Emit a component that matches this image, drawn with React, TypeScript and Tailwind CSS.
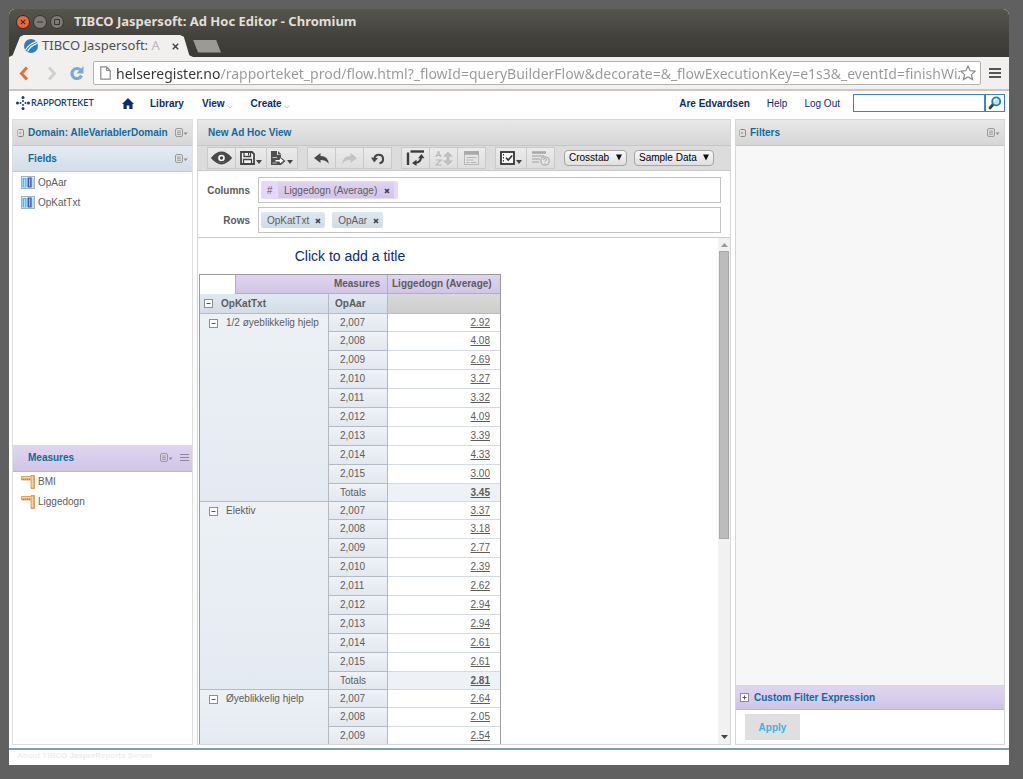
import React from 'react';
import clsx from 'clsx';

interface Row {
  year: string;
  value: string;
}

interface Group {
  name: string;
  rows: Row[];
}

const years = ['2,007', '2,008', '2,009', '2,010', '2,011', '2,012', '2,013', '2,014', '2,015', 'Totals'];

const toRows = (values: string[]): Row[] => values.map((value, i) => ({ year: years[i], value }));

const groups: Group[] = [
  { name: '1/2 øyeblikkelig hjelp', rows: toRows(['2.92', '4.08', '2.69', '3.27', '3.32', '4.09', '3.39', '4.33', '3.00', '3.45']) },
  { name: 'Elektiv', rows: toRows(['3.37', '3.18', '2.77', '2.39', '2.62', '2.94', '2.94', '2.61', '2.61', '2.81']) },
  { name: 'Øyeblikkelig hjelp', rows: toRows(['2.64', '2.05', '2.54']) },
];

/* ---------- icons ---------- */

const MenuIcon = () => (
  <svg width="13" height="10" viewBox="0 0 13 10" fill="none">
    <rect x="0.5" y="0.5" width="7" height="8" rx="1.5" stroke="#9a9a9a" />
    <path d="M2 3h4M2 4.7h4M2 6.4h4" stroke="#9a9a9a" strokeWidth="0.9" />
    <path d="M8.6 4.6h4l-2 2.4z" fill="#8a8a8a" />
  </svg>
);

const CollapseIcon = () => (
  <svg width="7" height="8" viewBox="0 0 7 8" fill="none">
    <path d="M1.500.5h3.800q1.200 0 1.200 1.200v4.600q0 1.200-1.200 1.200H1.500" stroke="#8c8480" />
    <path d="M.5 1v6" stroke="#b8b2ae" />
    <path d="M3.500 2.500v3L2 4z" fill="#8c8480" />
  </svg>
);

const FieldIcon = () => (
  <svg width="14" height="13" viewBox="0 0 14 13">
    <rect x="0.5" y="0.5" width="13" height="12" fill="#e4f1fb" stroke="#9fb3c8" />
    <rect x="1.500" y="2" width="4" height="9.500" fill="#4fb8f2" />
    <rect x="3" y="3" width="1.200" height="8.500" fill="#a5e2ff" />
    <rect x="6.500" y="1.500" width="4.200" height="10" fill="#4150ae" />
    <rect x="8.100" y="2.500" width="1.200" height="8" fill="#b4bff5" />
    <rect x="11.500" y="2" width="1.300" height="9.500" fill="#9fd3f3" />
  </svg>
);

const MeasureIcon = () => (
  <svg width="14" height="14" viewBox="0 0 14 14">
    <path d="M.5 1.500H10V.5h3.500V13.500H10V5H.5z" fill="#f2a961" stroke="#cf8c4c" strokeWidth="0.700" />
    <path d="M1 2.600h9M11.300 1.500v11" stroke="#fdd6a6" strokeWidth="1.200" />
    <path d="M2.500 3.700V5M4.500 3.700V5M6.500 3.700V5M8.500 3.700V5" stroke="#a86a30" strokeWidth="0.600" />
  </svg>
);

const ToggleIcon = ({ open = true }: { open?: boolean }) => (
  <svg width="9" height="9" viewBox="0 0 9 9" fill="none">
    <rect x="0.5" y="0.5" width="8" height="8" fill="#fff" stroke="#8d8d8d" />
    <path d="M2.500 4.500h4" stroke="#555" />
    {!open && <path d="M4.500 2.500v4" stroke="#555" />}
  </svg>
);

const Caret = () => (
  <svg width="6" height="4" viewBox="0 0 6 4" className="mt-2">
    <path d="M0 0h6L3 4z" fill="#444" />
  </svg>
);

const EyeIcon = () => (
  <svg width="21" height="14" viewBox="0 0 21 14" fill="none">
    <path d="M1 7Q10.500-4 20 7Q10.500 18 1 7z" fill="#fff" stroke="#484848" strokeWidth="1.800" />
    <path d="M1 7Q4 3.300 8 2.200Q5 7 8 11.800Q4 10.700 1 7zM20 7Q17 3.300 13 2.200Q16 7 13 11.800Q17 10.700 20 7z" fill="#484848" />
    <circle cx="10.500" cy="7" r="4.200" fill="#fff" stroke="#484848" strokeWidth="1.800" />
    <circle cx="10.500" cy="7" r="1.700" fill="#484848" />
  </svg>
);

const SaveIcon = () => (
  <svg width="15" height="14" viewBox="0 0 15 14" fill="none">
    <path d="M1 1h11l2 2v10H1z" fill="#f5f5f5" stroke="#444" strokeWidth="1.800" />
    <path d="M4 1.500v4h6.500v-4M3.500 13V8.500h8V13" stroke="#444" strokeWidth="1.300" />
    <path d="M8.500 2v2.500" stroke="#444" />
  </svg>
);

const ExportIcon = () => (
  <svg width="15" height="14" viewBox="0 0 15 14" fill="none">
    <path d="M0 0h6v4h4v2.500L14.500 10 10 14H0z" fill="#505050" />
    <path d="M7 0l3.500 3.500H7z" fill="#505050" />
    <path d="M4 8.500h4.500V6L13 9.800 8.500 13.400V11H4z" fill="#fff" stroke="#505050" />
    <path d="M1.500 6.500H6M1.500 12h4" stroke="#ddd" strokeWidth="0.800" />
  </svg>
);

const UndoIcon = () => (
  <svg width="15" height="11" viewBox="0 0 15 11">
    <path d="M0 5L6.500 0v3Q14.500 3.200 14.600 11Q12.500 7 6.500 7v3z" fill="#4a4a4a" />
  </svg>
);

const RedoIcon = () => (
  <svg width="15" height="11" viewBox="0 0 15 11">
    <path d="M15 5L8.500 0v3Q.5 3.200 .4 11Q2.500 7 8.500 7v3z" fill="#c4c4c4" />
  </svg>
);

const ResetIcon = () => (
  <svg width="14" height="13" viewBox="0 0 14 13" fill="none">
    <path d="M3.500 6.500A4.300 4.300 0 1 1 8.500 11.300" stroke="#484848" strokeWidth="2.100" />
    <path d="M0 5.500l7 .5-3.800 4.500z" fill="#484848" />
  </svg>
);

const PivotIcon = () => (
  <svg width="19" height="16" viewBox="0 0 19 16" fill="none">
    <path d="M4.500 1.500H18" stroke="#3c3c3c" strokeWidth="2.400" />
    <path d="M2 2.500V15" stroke="#3c3c3c" strokeWidth="2.400" />
    <path d="M9 13Q15 12.500 15 7" stroke="#3c3c3c" strokeWidth="2" />
    <path d="M6 13l4.500-3.300v6.300zM15.500 4l-3.500 4.200h6.500z" fill="#3c3c3c" />
  </svg>
);

const SortIcon = () => (
  <svg width="18" height="15" viewBox="0 0 18 15" fill="none" stroke="#b9b9b9" strokeWidth="1.200">
    <path d="M1 6L3.500 .5 6 6M2 4.300h3M1 9h5L1 14h5.500" />
    <path d="M9.500 5L13 1.500 16.500 5H13.800v5h2.700L13 13.500 9.500 10h2.700V5z" fill="#c9c9c9" />
  </svg>
);

const FormIcon = () => (
  <svg width="15" height="14" viewBox="0 0 15 14" fill="none">
    <rect x="0.5" y="0.5" width="14" height="13" stroke="#b8b8b8" />
    <path d="M0 2h15" stroke="#a9a9a9" strokeWidth="3.500" />
    <path d="M2.500 6.500h10M2.500 9h7M2.500 11.500h3M7 11.500h5" stroke="#b5b5b5" />
  </svg>
);

const OptionsIcon = () => (
  <svg width="15" height="14" viewBox="0 0 15 14" fill="none">
    <rect x="1" y="1" width="13" height="12" fill="#f8f8f8" stroke="#333" strokeWidth="1.800" />
    <path d="M3.500 3v8" stroke="#333" strokeDasharray="1.500 1.500" />
    <path d="M6 6.800l2.200 2.200 4-4.500" stroke="#333" strokeWidth="1.600" />
  </svg>
);

const QueryIcon = () => (
  <svg width="18" height="15" viewBox="0 0 18 15" fill="none">
    <path d="M0 1.500h14" stroke="#a9a9a9" strokeWidth="2.500" />
    <path d="M0 5h12M0 8h8M0 11h7" stroke="#b5b5b5" strokeWidth="1.300" />
    <circle cx="13" cy="10" r="4.200" fill="#e6e6e6" stroke="#b0b0b0" strokeWidth="1.300" />
    <path d="M11.500 9q0-1.500 1.500-1.500t1.500 1.300q0 .8-1.500 1.500v.7M13 12v1" stroke="#aaa" />
  </svg>
);

const SearchIcon = () => (
  <svg width="14" height="14" viewBox="0 0 14 14" fill="none">
    <path d="M5 8.500L2 12" stroke="#2c4250" strokeWidth="2.800" strokeLinecap="round" />
    <circle cx="8.200" cy="5.400" r="4" fill="#bfe3f2" stroke="#1f7f9e" strokeWidth="1.800" />
    <path d="M6 5q1-2 3-1.800" stroke="#fff" strokeWidth="1.300" />
  </svg>
);

/* ---------- shared parts ---------- */

const headerBase = 'flex shrink-0 items-center border-b text-[10px] font-bold text-[#0f6a9e]';
const greyHeader = 'h-[26px] border-[#c6c6c6] bg-linear-to-b from-[#e8e8e8] to-[#d6d6d6]';
const blueHeader = 'h-[26px] border-[#c2c9d2] bg-linear-to-b from-[#e4ebf3] to-[#d3dde8]';
const purpleHeader = 'border-[#bdb2d2] bg-linear-to-b from-[#e0d6f0] to-[#d0c4e6]';

const MenuButton = ({ label }: { label: string }) => (
  <button aria-label={label} className="ml-auto">
    <MenuIcon />
  </button>
);

interface ToolProps {
  label: string;
  caret?: boolean;
  disabled?: boolean;
  children: React.ReactNode;
}

const Tool: React.FC<ToolProps> = ({ label, caret, disabled, children }) => (
  <button
    aria-label={label}
    disabled={disabled}
    className={clsx(
      'flex h-5 items-center justify-center gap-px border-r border-[#c9c9c9] bg-linear-to-b from-[#ebebeb] to-[#dedede]',
      caret ? 'w-[31px]' : 'w-7',
    )}
  >
    {children}
    {caret && <Caret />}
  </button>
);

const ToolGroup = ({ children }: { children: React.ReactNode }) => (
  <div className="flex border-y border-l border-[#c9c9c9]">{children}</div>
);

const Picker = ({ label, value, width }: { label: string; value: string; width: string }) => (
  <div className={clsx('relative', width)}>
    <select
      aria-label={label}
      className="block h-4 w-full appearance-none rounded-sm border border-[#a5a5a5] bg-linear-to-b from-[#f8f8f8] to-[#dfdfdf] pl-1 text-[10px] leading-[14px] text-black"
    >
      <option>{value}</option>
    </select>
    <svg width="6" height="7" viewBox="0 0 6 7" className="pointer-events-none absolute top-1 right-[5px]">
      <path d="M0 .5h6L3 6.500z" fill="#111" />
    </svg>
  </div>
);

const RemoveButton = ({ name }: { name: string }) => (
  <button aria-label={`Remove ${name}`} className="px-1 pt-[2px]">
    <svg width="6" height="6" viewBox="0 0 6 6">
      <path d="M1 1l4 4M5 1L1 5" stroke="#444" strokeWidth="1.700" />
    </svg>
  </button>
);

const Chip = ({ name }: { name: string }) => (
  <span className="flex h-4 items-center gap-[2px] rounded-xs bg-linear-to-b from-[#dfe8f0] to-[#cfdbe7] pl-[6px]">
    {name}
    <RemoveButton name={name} />
  </span>
);

const Shelf = ({ label, children }: { label: string; children: React.ReactNode }) => (
  <div className="flex items-center gap-2 pr-[9px]">
    <span className="w-[52px] text-right font-bold">{label}</span>
    <div className="flex h-[26px] flex-1 items-center gap-[7px] border border-[#c3c3c3] bg-white px-[2px]">{children}</div>
  </div>
);

const FieldItem = ({ icon, name }: { icon: React.ReactNode; name: string }) => (
  <li className="flex h-5 items-center gap-[3px] pl-2">
    {icon}
    {name}
  </li>
);

/* ---------- browser chrome ---------- */

const BrowserChrome = () => (
  <header className="font-['Noto_Sans',sans-serif]">
    <div className="flex h-[26px] items-center rounded-t-md bg-linear-to-b from-[#56554d] to-[#43423d] pl-[7px]">
      <div className="flex gap-[3px]">
        <button aria-label="Close" className="flex size-[14px] items-center justify-center rounded-full border border-[#2d2c28] bg-[#ee6640]">
          <svg width="6" height="6" viewBox="0 0 6 6"><path d="M.8.8l4.400 4.400M5.200.8L.8 5.200" stroke="#53271a" strokeWidth="1.200" /></svg>
        </button>
        <button aria-label="Minimize" className="flex size-[14px] items-center justify-center rounded-full border border-[#35342f] bg-[#7d7b73]">
          <svg width="6" height="6" viewBox="0 0 6 6"><path d="M0 3h6" stroke="#35342f" /></svg>
        </button>
        <button aria-label="Maximize" className="flex size-[14px] items-center justify-center rounded-full border border-[#35342f] bg-[#7d7b73]">
          <svg width="6" height="6" viewBox="0 0 6 6" fill="none"><path d="M.5.5h5v5h-5z" stroke="#35342f" /></svg>
        </button>
      </div>
      <h1 className="ml-[10px] text-[13px] font-bold text-[#e2dfd6]">TIBCO Jaspersoft: Ad Hoc Editor - Chromium</h1>
    </div>

    <div className="flex h-[22px] items-center bg-linear-to-b from-[#43423d] to-[#3a3935]">
      <div className="flex h-full w-[184px] items-center bg-[#f1f0ef] pr-[14px] pl-[15px] text-[13px] text-[#4f4f4f] [clip-path:polygon(0_100%,2%_92%,6%_8%,8%_0,93%_0,95%_8%,98%_92%,100%_100%)]">
        <svg width="14" height="14" viewBox="0 0 14 14" className="shrink-0">
          <circle cx="7" cy="7" r="7" fill="#2f7fc0" />
          <path d="M1.500 11Q5 5 12.500 2.500M3.500 12.500Q6 7 13 4.500" stroke="#fff" strokeWidth="1.100" fill="none" />
        </svg>
        <span className="ml-1 whitespace-nowrap">
          TIBCO Jaspersoft: <span className="text-[#b9b8b7]">A</span>
        </span>
        <button aria-label="Close tab" className="ml-auto">
          <svg width="7" height="7" viewBox="0 0 7 7"><path d="M.8.8l5.400 5.400M6.200.8L.8 6.200" stroke="#444" strokeWidth="1.500" /></svg>
        </button>
      </div>
      <button aria-label="New tab" className="h-[13px] w-7 bg-[#9b9a97] [clip-path:polygon(0_0,82%_0,100%_100%,18%_100%)]" />
    </div>

    <div className="flex h-[34px] items-center border-b-2 border-[#c9c6c4] bg-[#f1f0ef] pr-2 pl-[10px]">
      <button aria-label="Back">
        <svg width="10" height="15" viewBox="0 0 10 15" fill="none"><path d="M8 1.500L2.500 7.500 8 13.500" stroke="#e2703a" strokeWidth="3" /></svg>
      </button>
      <button aria-label="Forward" disabled className="ml-[18px]">
        <svg width="10" height="15" viewBox="0 0 10 15" fill="none"><path d="M2 1.500l5.500 6L2 13.500" stroke="#d2d0ce" strokeWidth="3" /></svg>
      </button>
      <button aria-label="Reload" className="ml-3">
        <svg width="15" height="15" viewBox="0 0 15 15" fill="none">
          <path d="M11.500 4A5 5 0 1 0 12.500 9.500" stroke="#78abdb" strokeWidth="3.200" />
          <path d="M14.500 0v7.500H7.500z" fill="#78abdb" />
        </svg>
      </button>
      <div className="ml-[9px] flex h-6 min-w-0 flex-1 items-center rounded-xs border border-[#b4b2b0] bg-white pr-1 pl-[6px]">
        <svg width="11" height="14" viewBox="0 0 11 14" fill="none" className="shrink-0">
          <path d="M.8.8h5.700l3.700 3.700v8.700H.8zM6.500.8v3.700h3.700" stroke="#8a8a8a" strokeWidth="1.200" />
        </svg>
        <input
          aria-label="Address"
          readOnly
          defaultValue="helseregister.no/rapporteket_prod/flow.html?_flowId=queryBuilderFlow&decorate=&_flowExecutionKey=e1s3&_eventId=finishWizard"
          className="ml-[5px] min-w-0 flex-1 bg-[linear-gradient(90deg,#333_104px,#989898_104px)] bg-clip-text text-[14px] text-transparent"
        />
        <button aria-label="Bookmark" className="shrink-0">
          <svg width="16" height="16" viewBox="0 0 16 16" fill="none">
            <path d="M8 1l2.100 4.700 5.100.5-3.800 3.400 1.100 5L8 12l-4.500 2.600 1.100-5L.8 6.200l5.100-.5z" stroke="#8a8a8a" strokeWidth="1.200" />
          </svg>
        </button>
      </div>
      <button aria-label="Menu" className="ml-2 flex w-3 flex-col gap-[2px]">
        <span className="h-[2px] w-full bg-[#555]" />
        <span className="h-[2px] w-full bg-[#555]" />
        <span className="h-[2px] w-full bg-[#555]" />
      </button>
    </div>
  </header>
);

const NavChevron = () => (
  <svg width="6" height="4" viewBox="0 0 6 4" fill="none" className="mt-2">
    <path d="M.5.5L3 3 5.500.5" stroke="#c4c8cf" />
  </svg>
);

const NavBar = () => (
  <nav className="flex h-7 items-center pr-1 pb-1 pl-[7px] text-[10px] text-[#0d2a78]">
    <a href="#rapporteket" className="flex w-[78px] items-center gap-px font-['Lato',sans-serif] text-[9px] font-semibold text-[#173a84]">
      <svg width="14" height="14" viewBox="0 0 14 14" fill="#173a84" className="shrink-0">
        <circle cx="7" cy="1.500" r="1.500" />
        <circle cx="7" cy="5" r="1" />
        <circle cx="7" cy="9" r="1" />
        <circle cx="7" cy="12.500" r="1.500" />
        <circle cx="1.500" cy="7" r="1.500" />
        <circle cx="4.500" cy="7" r="1" />
        <circle cx="9.500" cy="7" r="1" />
        <circle cx="12.500" cy="7" r="1.500" />
      </svg>
      RAPPORTEKET
    </a>
    <a href="#home" aria-label="Home" className="ml-7">
      <svg width="12" height="11" viewBox="0 0 12 11" fill="#0d2a78">
        <path d="M6 0l6 6h-1.500v5H7.300V7.500H4.700V11H1.500V6H0z" />
      </svg>
    </a>
    <a href="#library" className="ml-4 font-bold">Library</a>
    <a href="#view" className="ml-[18px] flex items-center gap-[2px] font-bold">View<NavChevron /></a>
    <a href="#create" className="ml-[18px] flex items-center gap-[2px] font-bold">Create<NavChevron /></a>
    <a href="#user" className="ml-auto font-bold">Are Edvardsen</a>
    <a href="#help" className="ml-[17px]">Help</a>
    <a href="#logout" className="ml-[17px]">Log Out</a>
    <div className="ml-[13px] flex h-[18px] border border-[#3a86b4]">
      <input aria-label="Search" className="w-[130px] px-1 outline-none" />
      <button aria-label="Run search" className="flex w-5 items-center justify-center border-l-2 border-[#3a86b4]">
        <SearchIcon />
      </button>
    </div>
  </nav>
);

/* ---------- panels ---------- */

const FieldsPanel = () => (
  <aside className="flex w-[181px] shrink-0 flex-col border border-[#dcdfe0] bg-white">
    <div className={clsx(headerBase, greyHeader, 'gap-1 pr-1 pl-1')}>
      <CollapseIcon />
      <h2>Domain: AlleVariablerDomain</h2>
      <MenuButton label="Domain options" />
    </div>
    <div className={clsx(headerBase, blueHeader, 'pr-1 pl-[15px]')}>
      <h2>Fields</h2>
      <MenuButton label="Field options" />
    </div>
    <ul className="flex-1">
      <FieldItem icon={<FieldIcon />} name="OpAar" />
      <FieldItem icon={<FieldIcon />} name="OpKatTxt" />
    </ul>
    <div className={clsx(headerBase, purpleHeader, 'h-[27px] pr-[3px] pl-[15px]')}>
      <h2>Measures</h2>
      <MenuButton label="Measure options" />
      <svg width="9" height="7" viewBox="0 0 9 7" className="ml-[7px]">
        <path d="M0 .5h9M0 3.500h9M0 6.500h9" stroke="#8c8799" />
      </svg>
    </div>
    <ul className="flex-1">
      <FieldItem icon={<MeasureIcon />} name="BMI" />
      <FieldItem icon={<MeasureIcon />} name="Liggedogn" />
    </ul>
  </aside>
);

const Crosstab = () => (
  <table className="w-[302px] table-fixed border-separate border-spacing-0 border-t border-r border-l border-[#9a9a9a] text-left leading-4">
    <colgroup>
      <col className="w-9" />
      <col className="w-[93px]" />
      <col className="w-[59px]" />
      <col />
    </colgroup>
    <thead>
      <tr className="h-[19px]">
        <td className="border-r border-[#b5abc6] bg-white p-0" />
        <th colSpan={2} className="border-r border-b border-[#b5abc6] bg-linear-to-b from-[#dfd5ef] to-[#d0c5e5] p-0 pr-[7px] text-right">Measures</th>
        <th className="border-b border-[#b5abc6] bg-linear-to-b from-[#dfd5ef] to-[#d0c5e5] p-0 pl-1 whitespace-nowrap">Liggedogn (Average)</th>
      </tr>
      <tr className="h-5">
        <th colSpan={2} className="border-r border-b border-[#b3bac3] bg-linear-to-b from-[#e1e8f0] to-[#d3dde7] p-0 pl-1">
          <span className="flex items-center gap-2">
            <button aria-label="Collapse OpKatTxt"><ToggleIcon /></button>
            OpKatTxt
          </span>
        </th>
        <th className="border-r border-b border-[#b3bac3] bg-linear-to-b from-[#e1e8f0] to-[#d3dde7] p-0 pl-[6px]">OpAar</th>
        <td className="border-b border-[#bdbdbd] bg-linear-to-b from-[#d9d9d9] to-[#cdcdcd] p-0" />
      </tr>
    </thead>
    {groups.map((group) => (
      <tbody key={group.name}>
        {group.rows.map((row, i) => {
          const total = row.year === 'Totals';
          return (
            <tr key={row.year} className={i === 0 || total ? 'h-[18px]' : 'h-[19px]'}>
              {i === 0 && (
                <th
                  colSpan={2}
                  rowSpan={group.rows.length}
                  className="border-r border-b border-[#b3bac3] bg-linear-to-b from-[#edf1f5] to-[#e4eaf2] p-0 pt-px pl-[9px] align-top font-normal"
                >
                  <span className="flex items-center gap-2">
                    <button aria-label={`Collapse ${group.name}`}><ToggleIcon /></button>
                    {group.name}
                  </span>
                </th>
              )}
              <th className="border-r border-b border-[#b3bac3] bg-linear-to-b from-[#eff2f6] to-[#e3e8ef] p-0 pl-[11px] font-normal">{row.year}</th>
              <td className={clsx('border-b border-[#d3dae3] p-0 pr-[10px] text-right', total ? 'bg-[#eef2f6] font-bold' : 'bg-white')}>
                <a href="#drill" className="underline">{row.value}</a>
              </td>
            </tr>
          );
        })}
      </tbody>
    ))}
  </table>
);

const EditorPanel = () => (
  <main className="flex min-w-0 flex-1 flex-col border border-[#d4d6d8] bg-white">
    <div className={clsx(headerBase, greyHeader, 'pl-[10px]')}>
      <h2>New Ad Hoc View</h2>
    </div>

    <div className="flex h-[25px] shrink-0 items-center gap-[9px] border-b border-[#c9c9c9] bg-[#dcdcdc] pl-[9px]">
      <ToolGroup>
        <Tool label="Display mode"><EyeIcon /></Tool>
        <Tool label="Save" caret><SaveIcon /></Tool>
        <Tool label="Export" caret><ExportIcon /></Tool>
      </ToolGroup>
      <ToolGroup>
        <Tool label="Undo"><UndoIcon /></Tool>
        <Tool label="Redo" disabled><RedoIcon /></Tool>
        <Tool label="Undo all"><ResetIcon /></Tool>
      </ToolGroup>
      <ToolGroup>
        <Tool label="Switch group"><PivotIcon /></Tool>
        <Tool label="Sort" disabled><SortIcon /></Tool>
        <Tool label="Input controls" disabled><FormIcon /></Tool>
      </ToolGroup>
      <ToolGroup>
        <Tool label="Page properties" caret><OptionsIcon /></Tool>
        <Tool label="Show query" disabled><QueryIcon /></Tool>
      </ToolGroup>
      <div className="flex gap-[7px]">
        <Picker label="View type" value="Crosstab" width="w-[63px]" />
        <Picker label="Data mode" value="Sample Data" width="w-20" />
      </div>
    </div>

    <div className="flex shrink-0 flex-col gap-1 border-b border-[#c9cccf] pt-[6px] pb-1">
      <Shelf label="Columns">
        <span className="flex h-[18px] items-center rounded-xs bg-[#e6d8fb] pr-1">
          <span className="w-[17px] text-center italic">#</span>
          <span className="flex h-4 items-center gap-[3px] bg-linear-to-b from-[#dfd3f0] to-[#d2c5e8] pl-[6px]">
            Liggedogn (Average)
            <RemoveButton name="Liggedogn" />
          </span>
        </span>
      </Shelf>
      <Shelf label="Rows">
        <Chip name="OpKatTxt" />
        <Chip name="OpAar" />
      </Shelf>
    </div>

    <div className="flex min-h-0 flex-1">
      <div className="min-w-0 flex-1 overflow-hidden pl-px">
        <button className="block h-9 w-[302px] text-center text-[14px] text-[#0d2a78]">Click to add a title</button>
        <Crosstab />
      </div>
      <div className="flex w-3 flex-col items-center bg-[#f1f1f1] py-[5px]">
        <svg width="7" height="4" viewBox="0 0 7 4"><path d="M0 4h7L3.500 0z" fill="#999" /></svg>
        <div className="mt-1 h-[288px] w-[10px] border border-[#a8a8a8] bg-[#bcbcbc]" />
        <svg width="7" height="4" viewBox="0 0 7 4" className="mt-auto"><path d="M0 0h7L3.500 4z" fill="#444" /></svg>
      </div>
    </div>
  </main>
);

const FiltersPanel = () => (
  <aside className="flex w-[270px] shrink-0 flex-col border border-[#d4d6d8] bg-[#f7f7f7]">
    <div className={clsx(headerBase, greyHeader, 'gap-1 pr-1 pl-[3px]')}>
      <CollapseIcon />
      <h2>Filters</h2>
      <MenuButton label="Filter options" />
    </div>
    <div className="flex-1 border-b border-[#d4d6d8]" />
    <div className={clsx(headerBase, purpleHeader, 'h-6 gap-[5px] pl-1')}>
      <button aria-label="Expand custom filter expression"><ToggleIcon open={false} /></button>
      <h2>Custom Filter Expression</h2>
    </div>
    <div className="bg-white px-[9px] py-1">
      <button className="block h-[26px] w-[55px] bg-[#dfdfdf] text-[10px] font-bold text-[#43aee6]">Apply</button>
    </div>
  </aside>
);

const App: React.FC = () => (
  <div className="h-screen bg-[#606060] pt-[9px] pr-[14px] pb-[14px] pl-[9px] font-['Liberation_Sans',Arial,sans-serif] text-[10px] text-[#5c5c5c]">
    <div className="flex h-full flex-col rounded-t-md bg-white">
      <BrowserChrome />
      <NavBar />
      <div className="flex min-h-0 flex-1 gap-1 pr-1 pb-[3px] pl-[3px]">
        <FieldsPanel />
        <EditorPanel />
        <FiltersPanel />
      </div>
      <footer className="h-[17px] shrink-0 border-t-2 border-[#7f9fab] pl-2 text-[8px] leading-3 font-bold text-[#eeeeee]">
        <a href="#about">About TIBCO JasperReports Server</a>
      </footer>
    </div>
  </div>
);

export default App;
